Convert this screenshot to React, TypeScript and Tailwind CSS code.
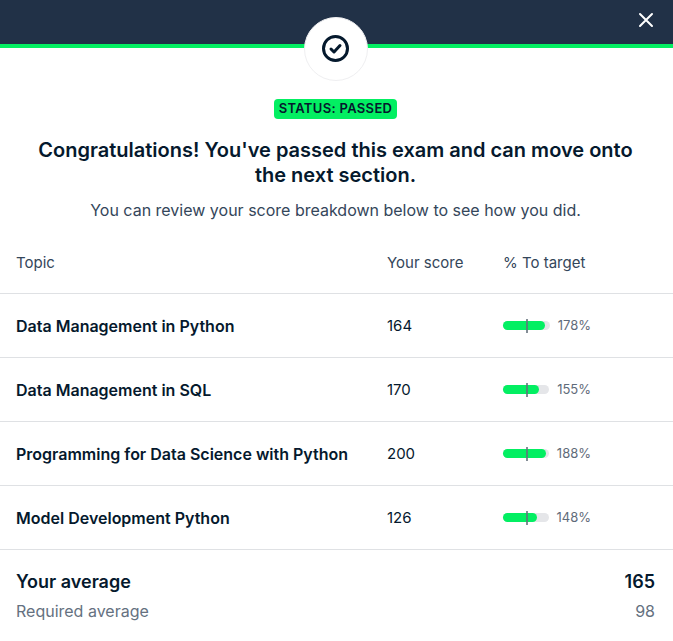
type Topic = { name: string; score: number; target: number };

const topics: Topic[] = [
  { name: "Data Management in Python", score: 164, target: 178 },
  { name: "Data Management in SQL", score: 170, target: 155 },
  { name: "Programming for Data Science with Python", score: 200, target: 188 },
  { name: "Model Development Python", score: 126, target: 148 },
];

function TargetBar({ value }: { value: number }) {
  return (
    <div className="flex w-[88px] items-center gap-2">
      <div className="relative h-[9px] flex-1 rounded-full bg-[#e5e6e9]">
        <div className="h-full rounded-full bg-[#03ef62]" style={{ width: `${value / 2}%` }} />
        <div className="absolute -top-[2px] left-1/2 h-[14px] w-[2px] bg-[#65707c]/80" />
      </div>
      <span className="text-[13px] leading-5 text-[#5f6b7a]">{value}%</span>
    </div>
  );
}

export default function App() {
  return (
    <div className="flex flex-col bg-white font-['Inter','Liberation_Sans',sans-serif] text-[#05192d]">
      <header className="flex h-12 justify-end border-b-4 border-[#03ef62] bg-[#213147] px-[18px]">
        <button type="button" aria-label="Close" className="mt-[11px] flex size-[18px] items-center justify-center">
          <svg viewBox="0 0 18 18" className="size-[18px]" fill="none" stroke="white" strokeWidth="2" strokeLinecap="round">
            <path d="M3 3 15 15M15 3 3 15" />
          </svg>
        </button>
      </header>

      <section className="flex flex-col items-center pr-[2px] text-center">
        <div className="relative -mt-[31px] flex size-16 items-center justify-center rounded-full border border-[#efeff1] bg-white">
          <svg viewBox="0 0 28 28" className="size-7" fill="none" stroke="#05192d" strokeLinecap="round" strokeLinejoin="round">
            <circle cx="13.500" cy="13.500" r="12" strokeWidth="3" />
            <path d="M9 14 12 17 18 10.500" strokeWidth="3" />
          </svg>
        </div>
        <strong className="mt-[18px] rounded bg-[#03ef62] px-[5px] pb-[2px] text-[13px] leading-[18px] font-semibold tracking-wide">
          STATUS: PASSED
        </strong>
        <h1 className="mt-[19px] px-8 text-xl leading-[25px] font-semibold">
          Congratulations! You've passed this exam and can move onto the next section.
        </h1>
        <p className="mt-[10px] text-base leading-6 text-[#34465a]">
          You can review your score breakdown below to see how you did.
        </p>
      </section>

      <table className="mt-[9px] w-full table-fixed border-collapse text-left text-base leading-6">
        <colgroup>
          <col />
          <col className="w-[116px]" />
          <col className="w-[170px]" />
        </colgroup>
        <thead>
          <tr className="h-[62px] border-b border-[#dfe1e4] text-[15px] text-[#34465a]">
            <th scope="col" className="pt-[2px] pl-4 font-normal">Topic</th>
            <th scope="col" className="pt-[2px] font-normal">Your score</th>
            <th scope="col" className="pt-[2px] font-normal">% To target</th>
          </tr>
        </thead>
        <tbody>
          {topics.map((topic) => (
            <tr key={topic.name} className="h-16 border-b border-[#dfe1e4]">
              <th scope="row" className="pt-[2px] pl-4 font-semibold">{topic.name}</th>
              <td className="pt-[2px] text-[15px]">{topic.score}</td>
              <td><TargetBar value={topic.target} /></td>
            </tr>
          ))}
        </tbody>
      </table>

      <dl className="flex flex-col gap-[5px] pt-5 pr-[18px] pb-[18px] pl-4">
        <div className="flex justify-between text-lg leading-6 font-semibold">
          <dt>Your average</dt>
          <dd>165</dd>
        </div>
        <div className="flex justify-between text-base leading-6 text-[#65717f]">
          <dt>Required average</dt>
          <dd>98</dd>
        </div>
      </dl>
    </div>
  );
}
